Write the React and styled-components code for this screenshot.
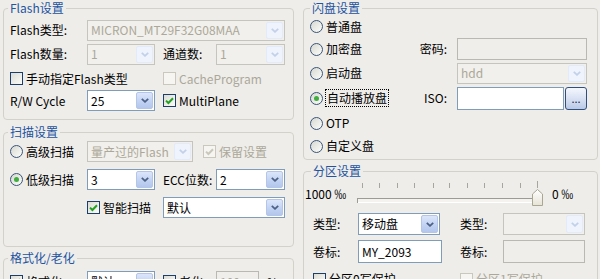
import React from "react";
import styled, { createGlobalStyle } from "styled-components";

const GlobalStyle = createGlobalStyle`
  html, body {
    margin: 0;
    padding: 0;
  }
  body {
    background: #eeedea;
    font-family: "Noto Sans CJK SC", "Liberation Sans", sans-serif;
    font-size: 12px;
    line-height: 16px;
    color: #000;
  }
`;

const Dialog = styled.div`
  width: 600px;
  height: 279px;
  box-sizing: border-box;
  padding-left: 3px;
  display: flex;
  gap: 9px;
  overflow: hidden;
  background: #eeedea;
`;

const Column = styled.div`
  display: flex;
  flex-direction: column;
  flex: none;
  width: ${(p) => p.$w}px;
`;

const Group = styled.fieldset`
  margin: ${(p) => p.$mt || 0}px 0 0;
  padding: ${(p) => p.$pad};
  border: 1px solid #d3d2c8;
  border-radius: 4px;
  min-width: 0;
`;

const Title = styled.legend`
  height: 16px;
  line-height: 16px;
  padding: 0 2px;
  margin-left: ${(p) => p.$ml || 0}px;
  color: #24539f;
`;

const Form = styled.div`
  display: grid;
  grid-template-columns: ${(p) => p.$cols};
  grid-template-rows: ${(p) => p.$rows};
  row-gap: ${(p) => p.$gap || 0}px;
  align-items: center;
  margin: ${(p) => p.$mt || 0}px 0 0 ${(p) => p.$ml || 0}px;
`;

const Cell = styled.div`
  grid-column: ${(p) => p.$col || "auto"};
  display: flex;
  align-items: center;
  gap: ${(p) => p.$gap || 0}px;
`;

const Label = styled.span`
  grid-column: ${(p) => p.$col || "auto"};
  text-align: ${(p) => (p.$right ? "right" : "left")};
  white-space: nowrap;
  color: ${(p) => (p.$disabled ? "#aca899" : "#000")};
`;

/* combo box */
const ComboBox = styled.div`
  grid-column: ${(p) => p.$col || "auto"};
  display: flex;
  box-sizing: border-box;
  width: ${(p) => (p.$w ? `${p.$w}px` : "100%")};
  height: ${(p) => p.$h || 21}px;
  border: 1px solid ${(p) => (p.$disabled ? "#c6c5bd" : "#7f9db9")};
  background: ${(p) => (p.$disabled ? "#f1f0ec" : "#fff")};
  color: ${(p) => (p.$disabled ? "#aca899" : "#000")};
`;

const ComboText = styled.span`
  flex: 1;
  min-width: 0;
  padding-left: 3px;
  align-self: center;
  white-space: nowrap;
  overflow: hidden;
`;

const ComboButton = styled.span`
  flex: none;
  width: 15px;
  margin: 1px;
  display: flex;
  align-items: center;
  justify-content: center;
  border: 1px solid ${(p) => (p.$disabled ? "#e3ebfa" : "#b4c5e8")};
  border-radius: 2px;
  background: ${(p) =>
    p.$disabled
      ? "#eef3fc"
      : "linear-gradient(#dce6fa, #c2d3f3 55%, #b3c6ec)"};
`;

function Combo({ value, disabled, w, col, h }) {
  return (
    <ComboBox $disabled={disabled} $w={w} $col={col} $h={h}>
      <ComboText>{value}</ComboText>
      <ComboButton $disabled={disabled}>
        <svg width="8" height="5" viewBox="0 0 8 5">
          <path
            d="M0.8 0.8 L4 3.8 L7.2 0.8"
            fill="none"
            stroke={disabled ? "#c3d0ea" : "#4d6185"}
            strokeWidth="1.8"
          />
        </svg>
      </ComboButton>
    </ComboBox>
  );
}

/* edit box */
const Input = styled.div`
  grid-column: ${(p) => p.$col || "auto"};
  box-sizing: border-box;
  width: ${(p) => (p.$w ? `${p.$w}px` : "100%")};
  flex: ${(p) => (p.$w ? "none" : "1")};
  height: ${(p) => p.$h || 22}px;
  padding-left: 3px;
  display: flex;
  align-items: center;
  white-space: nowrap;
  border: 1px solid ${(p) => (p.$disabled ? "#b9b8b1" : "#7f9db9")};
  background: ${(p) => (p.$disabled ? "#efeeea" : "#fff")};
  color: ${(p) => (p.$disabled ? "#aca899" : "#000")};
`;

const BrowseButton = styled.div`
  flex: none;
  box-sizing: border-box;
  width: 22px;
  height: 23px;
  border: 1px solid #2f4f7f;
  border-radius: 3px;
  background: linear-gradient(#f4f7fd, #d3ddf1 60%, #b9c8e6);
  display: flex;
  align-items: center;
  justify-content: center;
  font-size: 11px;
  color: #1b2a44;
`;

/* check boxes and radio buttons */
const Choice = styled.div`
  grid-column: ${(p) => p.$col || "auto"};
  display: flex;
  align-items: center;
  gap: 3px;
  white-space: nowrap;
  color: ${(p) => (p.$disabled ? "#aca899" : "#000")};
`;

const Box = styled.span`
  flex: none;
  box-sizing: border-box;
  width: 13px;
  height: 13px;
  display: flex;
  align-items: center;
  justify-content: center;
  border: 1px solid ${(p) => (p.$disabled ? "#cac8bb" : "#1c3f6a")};
  background: ${(p) =>
    p.$disabled ? "#f6f5f2" : "linear-gradient(135deg, #dcdcd6, #fbfbf9)"};
`;

const Dot = styled.span`
  flex: none;
  box-sizing: border-box;
  width: 13px;
  height: 13px;
  border-radius: 50%;
  display: flex;
  align-items: center;
  justify-content: center;
  border: 1px solid #3a5578;
  background: linear-gradient(135deg, #d8d8d2, #fcfcfa);
  &::after {
    content: "";
    width: 5px;
    height: 5px;
    border-radius: 50%;
    background: ${(p) => (p.$on ? "#3fae3f" : "transparent")};
  }
`;

const Focus = styled.span`
  outline: 1px dotted #000;
  outline-offset: 0;
  padding: 0 1px;
`;

function Check({ children, checked, disabled, col }) {
  return (
    <Choice $col={col} $disabled={disabled}>
      <Box $disabled={disabled}>
        {checked && (
          <svg width="9" height="8" viewBox="0 0 9 8">
            <path
              d="M1 3.6 L3.4 6 L8 1.2"
              fill="none"
              stroke={disabled ? "#cac8bb" : "#22a122"}
              strokeWidth="2"
            />
          </svg>
        )}
      </Box>
      <span>{children}</span>
    </Choice>
  );
}

function Radio({ children, checked, focused, col }) {
  return (
    <Choice $col={col}>
      <Dot $on={checked} />
      {focused ? <Focus>{children}</Focus> : <span>{children}</span>}
    </Choice>
  );
}

/* track bar */
const SliderRow = styled.div`
  display: flex;
  align-items: center;
  height: 30px;
`;

const ScaleText = styled.span`
  flex: none;
  width: ${(p) => p.$w}px;
  white-space: nowrap;
`;

const TICKS = [5, 22, 40, 57, 76, 92, 110, 127, 145, 163, 180];

function TrackBar() {
  return (
    <svg width="195" height="30" viewBox="0 0 195 30">
      {TICKS.map((x, i) => (
        <line
          key={x}
          x1={x + 0.5}
          x2={x + 0.5}
          y1={i === TICKS.length - 1 ? 2 : 4}
          y2={9}
          stroke="#a7a69e"
        />
      ))}
      <rect x="0.5" y="19.5" width="184" height="4" fill="#f4f3ef" stroke="#9d9c94" />
      <line x1="1" x2="184" y1="23.5" y2="23.5" stroke="#ffffff" />
      <defs>
        <linearGradient id="thumb" x1="0" y1="0" x2="0" y2="1">
          <stop offset="0" stopColor="#ffffff" />
          <stop offset="1" stopColor="#e6e3d6" />
        </linearGradient>
      </defs>
      <path
        d="M175.5 15 L180.5 10.5 L185.5 15 L185.5 26.5 L175.5 26.5 Z"
        fill="url(#thumb)"
        stroke="#a9a692"
      />
    </svg>
  );
}

export default function App() {
  return (
    <>
      <GlobalStyle />
      <Dialog>
        <Column $w={291}>
          <Group $pad="3px 8px 8px 6px">
            <Title $ml={-2}>Flash设置</Title>
            <Form $cols="77px 76px 53px 69px" $rows="22px 26px 23px 21px">
              <Label>Flash类型:</Label>
              <Combo col="2 / 5" value="MICRON_MT29F32G08MAA" disabled />
              <Label>Flash数量:</Label>
              <Combo w={68} value="1" disabled />
              <Label>通道数:</Label>
              <Combo value="1" disabled />
              <Check col="1 / 3">手动指定Flash类型</Check>
              <Check col="3 / 5" disabled>
                CacheProgram
              </Check>
              <Label>R/W Cycle</Label>
              <Combo w={68} value="25" />
              <Check col="3 / 5" checked>
                MultiPlane
              </Check>
            </Form>
          </Group>

          <Group $mt={4} $pad="1px 8px 28px 6px">
            <Title $ml={-2}>扫描设置</Title>
            <Form $cols="77px 76px 53px 69px" $rows="21px 21px 21px" $gap={7}>
              <Radio col="1">高级扫描</Radio>
              <Cell $col="2 / 5" $gap={10}>
                <Combo w={106} value="量产过的Flash" disabled />
                <Check checked disabled>
                  保留设置
                </Check>
              </Cell>
              <Radio col="1" checked>
                低级扫描
              </Radio>
              <Combo w={68} value="3" />
              <Label>ECC位数:</Label>
              <Combo value="2" />
              <Check col="2" checked>
                智能扫描
              </Check>
              <Combo col="3 / 5" value="默认" />
            </Form>
          </Group>

          <Group $mt={3} $pad="5px 8px 10px 6px">
            <Title $ml={-2}>格式化/老化</Title>
            <Form $cols="77px 76px 53px 69px" $rows="21px">
              <Check checked>格式化</Check>
              <Combo w={68} value="默认" />
              <Check>老化</Check>
              <Cell $gap={8}>
                <Input $w={43} $h={21} $disabled>
                  100
                </Input>
                <Label>%</Label>
              </Cell>
            </Form>
          </Group>
        </Column>

        <Column $w={295}>
          <Group $pad="0 10px 2px 6px">
            <Title>闪盘设置</Title>
            <Form
              $cols="100px 37px 10px 130px"
              $rows="21px 24px 24px 26px 24px 22px"
            >
              <Radio col="1">普通盘</Radio>
              <Radio col="1">加密盘</Radio>
              <Label $right>密码:</Label>
              <Input $col="4" $disabled />
              <Radio col="1">启动盘</Radio>
              <Combo col="4" value="hdd" disabled />
              <Radio col="1" checked focused>
                自动播放盘
              </Radio>
              <Label $right>ISO:</Label>
              <Cell $col="4" $gap={1}>
                <Input $h={23} />
                <BrowseButton>...</BrowseButton>
              </Cell>
              <Radio col="1">OTP</Radio>
              <Radio col="1">自定义盘</Radio>
            </Form>
          </Group>

          <Group $mt={3} $pad="0 10px 10px 1px">
            <Title $ml={6}>分区设置</Title>
            <SliderRow>
              <ScaleText $w={52}>1000 ‰</ScaleText>
              <TrackBar />
              <ScaleText $w={30}>0 ‰</ScaleText>
            </SliderRow>
            <Form
              $ml={8}
              $mt={4}
              $cols="45px 102px 43px 82px"
              $rows="22px 23px 22px"
              $gap={5}
            >
              <Label>类型:</Label>
              <Combo w={82} h={22} value="移动盘" />
              <Label>类型:</Label>
              <Combo h={22} disabled />
              <Label>卷标:</Label>
              <Input $w={84} $h={23}>
                MY_2093
              </Input>
              <Label>卷标:</Label>
              <Input $h={23} $disabled />
              <Check col="1 / 3">分区0写保护</Check>
              <Check col="3 / 5" disabled>
                分区1写保护
              </Check>
            </Form>
          </Group>
        </Column>
      </Dialog>
    </>
  );
}
